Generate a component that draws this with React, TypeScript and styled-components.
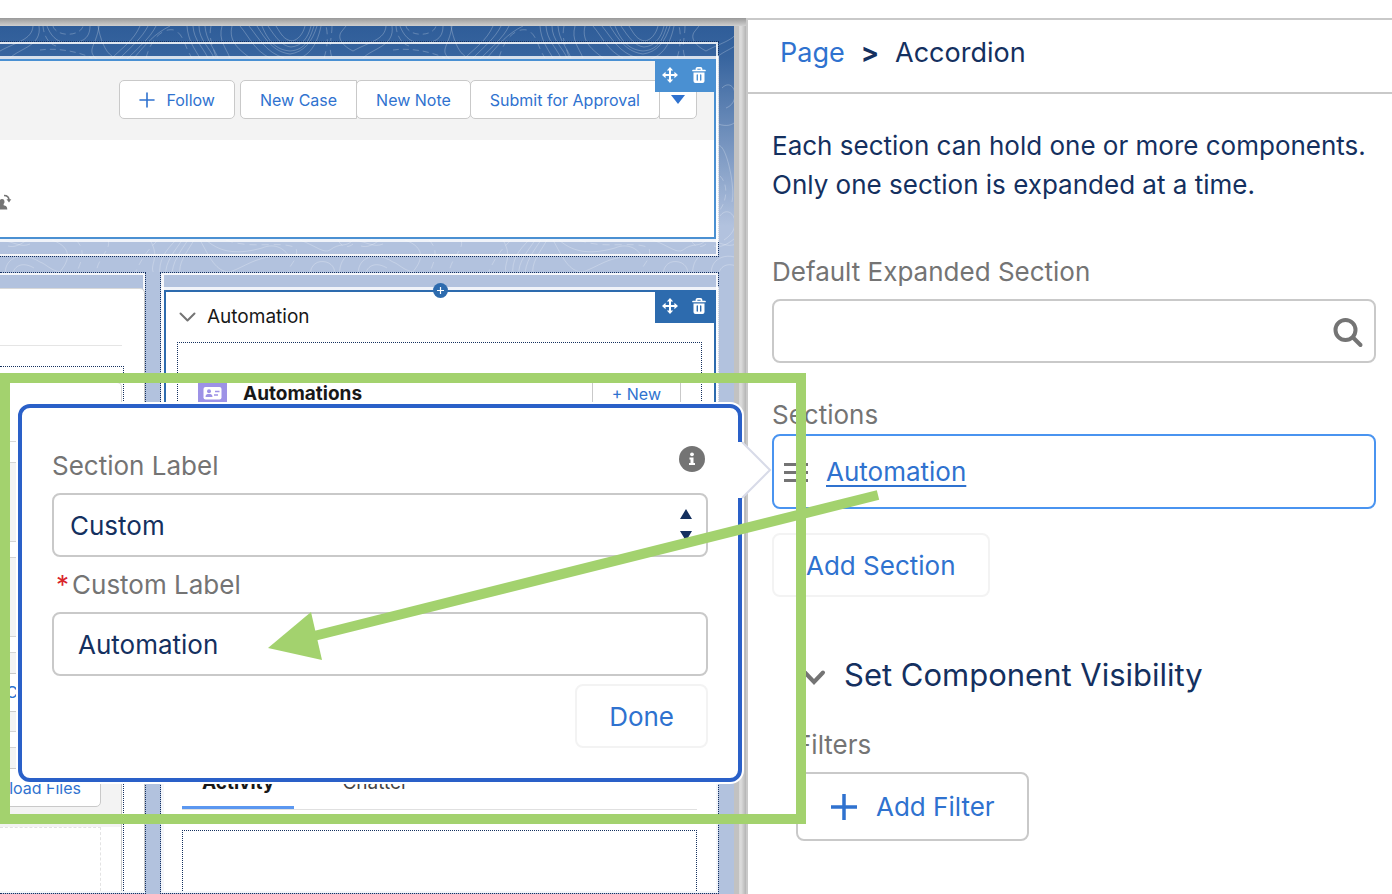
import React from "react";
import styled, { createGlobalStyle, css } from "styled-components";

const color = {
  link: "#2f72cf",
  navy: "#14305f",
  grey: "#747474",
  line: "#c9c9c9",
  faint: "#f3f3f3",
  canvas: "#b2c2de",
  select: "#4a90d2",
  active: "#2d6bae",
  popover: "#2a60c8",
  marker: "#a3d26e",
};

const GlobalStyle = createGlobalStyle`
  *, *::before, *::after { box-sizing: border-box; }
  body {
    margin: 0;
    background: #fff;
    color: ${color.navy};
    font-family: Inter, "Liberation Sans", sans-serif;
  }
  button, input, select { font: inherit; color: inherit; margin: 0; }
  h2, h3, p { margin: 0; font-weight: 400; }
`;

const Page = styled.div`
  display: flex;
  min-height: 100vh;
  padding-top: 18px;
  overflow: hidden;
`;

/* ---------- canvas ---------- */

const Canvas = styled.main`
  flex: 1;
  min-width: 0;
  display: flex;
  padding: 8px 12px 0 0;
  border-right: 2px solid ${color.line};
  background:
    linear-gradient(#999, #cfcfcf) top / 100% 8px no-repeat,
    linear-gradient(to left, #b4b4b4 0, #dcdcdc 5px, #d6d6d6 7px, #c2c2c2 7px);
`;

const Board = styled.div`
  position: relative;
  flex: 1;
  min-width: 0;
  display: flex;
  flex-direction: column;
  gap: 15px;
  padding: 15px 15px 0 0;
  overflow: hidden;
  background: linear-gradient(#2f5d99 0, #38659f 32px, #b2c2de 200px);
`;

const Contours = styled.svg`
  position: absolute;
  inset: 0 0 auto 0;
  width: 100%;
  height: 246px;
`;

const Region = styled.section<{ $open?: boolean }>`
  position: relative;
  display: flex;
  flex-direction: column;
  min-width: 0;
  border: 1px dotted ${color.navy};
  ${(p) => p.$open && css`border-left: 0;`}
`;

const Frame = styled.div<{ $open?: boolean }>`
  flex: 1;
  display: flex;
  flex-direction: column;
  border: 2px solid rgba(255, 255, 255, 0.85);
  border-left-width: ${(p) => (p.$open ? 0 : 3)}px;
`;

const Block = styled.div<{ $tone: string; $open?: boolean }>`
  position: relative;
  margin-top: 15px;
  border: 2px solid ${(p) => p.$tone};
  ${(p) => p.$open && css`border-left: 0;`}
  background: #fff;
  box-shadow: 0 0 0 3px rgba(255, 255, 255, 0.8);
`;

const HeaderBlock = styled(Block)`
  margin: 15px 0 15px;
  min-height: 180px;
`;

const AccordionBlock = styled(Block)`
  min-height: 440px;
`;

const BlockTools = styled.div<{ $tone: string }>`
  position: absolute;
  top: 0;
  right: 0;
  display: flex;
  gap: 9px;
  padding: 4px 5px 7px;
  background: ${(p) => p.$tone};
`;

const ToolButton = styled.button`
  display: flex;
  padding: 0;
  border: 0;
  background: none;
  width: 20px;
  height: 20px;
`;

const AddBadge = styled.button`
  position: absolute;
  top: -9px;
  left: 50%;
  display: flex;
  width: 15px;
  height: 15px;
  margin-left: -7px;
  padding: 0;
  border: 0;
  border-radius: 50%;
  background: ${color.active};
`;

const ActionBar = styled.div`
  display: flex;
  justify-content: flex-end;
  gap: 5px;
  padding: 19px 17px 21px;
  background: ${color.faint};
`;

const ButtonGroup = styled.div`
  display: flex;
  > * { border-radius: 0; margin-left: -1px; }
  > *:first-child { border-radius: 5px 0 0 5px; margin-left: 0; }
  > *:last-child { border-radius: 0 5px 5px 0; }
`;

const SmallButton = styled.button<{ $pad?: number }>`
  flex: none;
  display: flex;
  align-items: center;
  justify-content: center;
  gap: 11px;
  height: 39px;
  padding: 0 ${(p) => p.$pad ?? 19}px;
  border: 1px solid ${color.line};
  border-radius: 5px;
  background: #fff;
  color: ${color.link};
  font-size: 16px;
  line-height: 20px;
  white-space: nowrap;
`;

const HeaderBody = styled.div`
  padding-top: 54px;
  svg { display: block; }
`;

const Columns = styled.div`
  position: relative;
  flex: 1;
  display: grid;
  grid-template-columns: 146px minmax(0, 1fr);
  gap: 14px;
`;

const MainCard = styled.div`
  flex: 1;
  margin: 13px -2px 0 0;
  padding: 56px 22px 0 0;
  border-top: 1px solid #d8d8d8;
  border-right: 1px solid ${color.line};
  border-top-right-radius: 5px;
  background: #fff;
  display: flex;
  flex-direction: column;
`;

const RelatedLists = styled.div`
  flex: 1;
  display: flex;
  flex-direction: column;
  gap: 15px;
  margin: 20px -2px 0 0;
  padding: 15px 1px 0 0;
  border-top: 1px dotted ${color.navy};
  border-right: 1px dotted ${color.navy};
`;

const Rule = styled.div`
  border-top: 1px solid #e5e5e5;
`;

const SummaryCard = styled.div`
  height: 60px;
  margin-bottom: 5px;
  border: 1px solid #d8d8d8;
  border-left: 0;
  border-radius: 0 5px 0 0;
`;

const ListHeader = styled.div`
  display: flex;
  justify-content: flex-end;
  align-items: center;
  height: 80px;
  padding-right: 20px;
  overflow: hidden;
  border: 1px solid #d4d4d4;
  border-left: 0;
  background: ${color.faint};
`;

const LastList = styled.div`
  flex: 1;
  display: flex;
  flex-direction: column;
  border-right: 1px solid ${color.line};
  ${ListHeader} { border-right: 0; border-bottom: 0; }
`;

const DropZone = styled.div`
  flex: 1;
  margin-right: 20px;
  border-top: 1px dashed #e3e3e3;
  border-right: 1px dashed #e3e3e3;
`;

const ClippedButton = styled(SmallButton)`
  flex: 1;
  justify-content: flex-start;
  padding: 0 5px;
`;

const AccordionTitle = styled.h3`
  display: flex;
  align-items: center;
  gap: 11px;
  height: 50px;
  padding-left: 13px;
  color: #181818;
  font-size: 19px;
  line-height: 24px;
`;

const Slot = styled.div`
  margin: 0 12px 0 11px;
  padding: 31px 20px 0;
  border: 1px dotted ${color.navy};
  border-bottom: 0;
`;

const SlotHeader = styled.div`
  display: flex;
  align-items: center;
  gap: 16px;
  height: 39px;
`;

const SlotTitle = styled.h3`
  flex: 1;
  color: #181818;
  font-size: 19px;
  font-weight: 700;
  line-height: 24px;
`;

const TabsCard = styled.div`
  flex: 1;
  display: flex;
  flex-direction: column;
  margin-top: 15px;
  padding: 16px 19px 0 18px;
  background: #fff;
`;

const TabList = styled.div`
  display: flex;
  gap: 28px;
  border-bottom: 1px solid #e0e0e0;
`;

const Tab = styled.button<{ $on?: boolean }>`
  height: 48px;
  padding: 0 20px 2px;
  border: 0;
  border-bottom: 3px solid ${(p) => (p.$on ? "#5b97f0" : "transparent")};
  background: none;
  color: ${(p) => (p.$on ? "#181818" : "#444")};
  font-size: 19px;
  font-weight: ${(p) => (p.$on ? 700 : 400)};
  line-height: 24px;
`;

const TabSlot = styled.div`
  flex: 1;
  margin-top: 20px;
  border: 1px dotted ${color.navy};
  border-bottom: 0;
`;

/* ---------- property panel ---------- */

const Panel = styled.aside`
  flex: 0 0 644px;
  border-top: 2px solid ${color.line};
  background: #fff;
`;

const Crumbs = styled.nav`
  display: flex;
  align-items: center;
  gap: 16px;
  height: 74px;
  padding: 0 32px 8px;
  border-bottom: 2px solid ${color.line};
  font-size: 27px;
  line-height: 39px;
  a { color: ${color.link}; text-decoration: none; }
  b { font-weight: 700; }
`;

const PanelBody = styled.div`
  padding: 32px 16px 0 24px;
  font-size: 26px;
  line-height: 39px;
`;

const Label = styled.label`
  color: ${color.grey};
`;

const Caption = styled.div`
  color: ${color.grey};
`;

const Field = styled.div<{ $top?: number }>`
  position: relative;
  display: flex;
  flex-direction: column;
  gap: 8px;
  margin-top: ${(p) => p.$top ?? 0}px;
`;

const control = css`
  width: 100%;
  height: 64px;
  border: 2px solid ${color.line};
  border-radius: 8px;
  background: #fff;
  color: ${color.navy};
  outline: 0;
`;

const TextInput = styled.input`
  ${control}
  padding: 0 24px;
`;

const Select = styled.select`
  ${control}
  appearance: none;
  padding: 0 16px;
`;

const ControlWrap = styled.div`
  position: relative;
  display: flex;
`;

const ControlIcon = styled.svg`
  position: absolute;
  top: 0;
  right: 10px;
  height: 100%;
  pointer-events: none;
`;

const SectionItem = styled.div`
  position: relative;
  display: flex;
  align-items: center;
  gap: 18px;
  height: 75px;
  padding: 0 10px;
  border: 2px solid #4a94f0;
  border-radius: 8px;
  a {
    color: ${color.link};
    text-underline-offset: 4px;
    text-decoration-thickness: 2px;
  }
`;

const SectionsBlock = styled.div`
  margin: 32px 0 24px;
`;

const Button = styled.button<{ $faint?: boolean; $tall?: boolean }>`
  display: flex;
  align-items: center;
  gap: 18px;
  height: ${(p) => (p.$tall ? 69 : 64)}px;
  padding: 0 32px;
  border: 2px solid ${(p) => (p.$faint ? color.faint : color.line)};
  border-radius: 8px;
  background: #fff;
  color: ${color.link};
`;

const Visibility = styled.section`
  margin-top: 54px;
  padding-left: 24px;
`;

const VisibilityTitle = styled.h2`
  display: flex;
  align-items: center;
  gap: 18px;
  margin: 0 0 26px 6px;
  font-size: 31px;
  line-height: 48px;
`;

const FilterLabel = styled(Caption)`
  margin-bottom: 8px;
`;

/* ---------- popover and marker ---------- */

const Popover = styled.div`
  position: absolute;
  z-index: 2;
  top: -32px;
  right: 100%;
  width: 724px;
  margin-right: 32px;
  padding: 38px 30px 30px;
  display: flex;
  flex-direction: column;
  gap: 8px;
  border: 4px solid ${color.popover};
  border-radius: 12px;
  background: #fff;
  box-shadow: 0 0 0 2px #fff;
`;

const Nubbin = styled.svg`
  position: absolute;
  top: 32px;
  left: 100%;
`;

const LabelRow = styled.div`
  display: flex;
  justify-content: space-between;
  align-items: flex-start;
  padding-right: 3px;
`;

const RequiredLabel = styled(Label)`
  display: flex;
  gap: 3px;
  padding-left: 4px;
  span { color: #d9252a; }
`;

const DoneRow = styled.div`
  display: flex;
  justify-content: flex-end;
`;

const Marker = styled.svg`
  position: absolute;
  z-index: 3;
  top: -63px;
  left: -774px;
  pointer-events: none;
`;

function ContourLines() {
  return (
    <Contours aria-hidden="true">
      <defs>
        <pattern id="contour" width="353" height="250" patternUnits="userSpaceOnUse">
          <g fill="none" stroke="#fff" strokeOpacity="0.24" strokeWidth="1">
            <path d="M33 0C32 14 16 16 0 25M353 25C343 20 336 12 342 5L346 0" />
            <path d="M39 0C42 20 20 22 10 32M90 0C90 14 80 17 68 17C56 17 50 8 47 0M99 0C96 22 84 24 100 36M98 0C100 12 105 26 112 30" />
            <path d="M53 0C56 11 80 11 83 0M43 0C44 12 50 18 56 20M40 24C54 22 74 24 92 32" strokeDasharray="6 4" />
            <path d="M112 32C122 22 134 14 140 0M120 32C132 20 142 12 148 0M126 34C140 20 150 12 156 0M134 32C146 18 154 8 170 0" />
            <path d="M146 32C152 10 164 2 174 4C184 8 184 20 192 32" strokeDasharray="7 5" />
            <path d="M187 0C188 14 194 22 200 32M193 0C194 14 202 20 208 32M199 0C199 14 210 22 214 32M205 0C206 14 214 22 218 32M222 0C218 14 226 22 230 32" />
            <path d="M211 0C208 14 214 22 216 32M324 32C328 20 328 8 326 0M332 0C332 12 328 20 332 32" strokeDasharray="7 5" />
            <path d="M232 0C228 16 240 24 250 32M240 0C250 12 254 24 270 32M249 0C260 14 266 26 284 32M257 0C268 18 276 26 290 28C304 26 312 16 317 0" />
            <path d="M268 0C276 12 282 20 291 21C302 20 308 12 311 0M276 0C281 8 284 14 292 15C298 14 303 8 305 0M262 0C270 20 280 24 290 25C306 24 310 12 314 0M321 0C316 24 306 30 296 34" />
            <path d="M16 62C28 50 36 76 20 82M12 98C30 104 32 90 40 86M10 122C18 108 30 160 26 176M14 190C24 176 40 200 18 214M8 220C20 224 36 206 40 200" />
            <path d="M14 150C24 160 20 180 10 188" strokeDasharray="6 4" />
            <path d="M0 214C16 216 20 222 30 218M6 250C2 236 18 222 40 236C46 238 50 244 60 246M12 250C14 238 24 236 34 242M52 214C74 222 70 236 56 250M20 250C24 246 30 246 36 250" />
            <path d="M76 214C86 224 82 234 76 248M108 214C112 224 96 232 96 250M134 250C142 230 150 222 158 214" strokeDasharray="7 5" />
            <path d="M150 214C162 234 146 240 156 250M160 250C158 234 166 224 176 214M166 250C164 236 176 224 182 214M172 250C172 236 180 226 188 214M180 250C178 236 186 228 194 214" />
            <path d="M200 214C210 232 216 246 230 246C246 240 254 232 276 230M206 214C222 228 240 228 262 222C276 216 286 224 290 232" />
            <path d="M226 214C252 224 280 214 296 222C300 236 284 240 290 250M338 214C342 222 348 222 353 218" strokeDasharray="7 5" />
            <path d="M310 250C310 238 318 234 326 236C334 238 336 246 334 250M340 250C338 238 346 226 353 230M300 214C316 220 324 228 330 224C340 216 346 222 353 214" />
          </g>
        </pattern>
      </defs>
      <rect width="100%" height="246" fill="url(#contour)" />
    </Contours>
  );
}

function Tools({ tone }: { tone: string }) {
  return (
    <BlockTools $tone={tone}>
      <ToolButton aria-label="Move component">
        <svg width="20" height="20" viewBox="0 0 20 20">
          <path d="M10 4v12M4 10h12" stroke="#fff" strokeWidth="2" />
          <path d="M10 2l3.2 3.6H6.800zM10 18l3.200-3.600H6.800zM2 10l3.600-3.200v6.400zM18 10l-3.600-3.200v6.400z" fill="#fff" />
        </svg>
      </ToolButton>
      <ToolButton aria-label="Delete component">
        <svg width="20" height="20" viewBox="0 0 20 20">
          <path d="M4 5.500h12M7.500 5V3.800a1 1 0 0 1 1-1h3a1 1 0 0 1 1 1V5" fill="none" stroke="#fff" strokeWidth="1.700" strokeLinecap="round" />
          <path d="M4.500 7.500h11v8.500a2 2 0 0 1-2 2h-7a2 2 0 0 1-2-2z" fill="#fff" />
          <path d="M8.300 10v5M11.700 10v5" stroke={tone} strokeWidth="1.400" strokeLinecap="round" />
        </svg>
      </ToolButton>
    </BlockTools>
  );
}

export default function App() {
  return (
    <>
      <GlobalStyle />
      <Page>
        <Canvas>
          <Board>
            <ContourLines />
            <Region $open>
              <Frame $open>
                <HeaderBlock $tone={color.select} $open>
                  <ActionBar>
                    <SmallButton>
                      <svg width="16" height="16" viewBox="0 0 16 16">
                        <path d="M8 1v14M1 8h14" stroke={color.link} strokeWidth="1.600" strokeLinecap="round" />
                      </svg>
                      Follow
                    </SmallButton>
                    <ButtonGroup>
                      <SmallButton>New Case</SmallButton>
                      <SmallButton>New Note</SmallButton>
                      <SmallButton>Submit for Approval</SmallButton>
                      <SmallButton $pad={11} aria-label="More actions">
                        <svg width="14" height="9" viewBox="0 0 14 9">
                          <path d="M0 0h14L7 9z" fill={color.link} />
                        </svg>
                      </SmallButton>
                    </ButtonGroup>
                  </ActionBar>
                  <HeaderBody>
                    <svg width="12" height="16" viewBox="0 0 12 16" fill={color.grey}>
                      <path d="M-3 15.500c0-3 1.500-3.700 3-4.200v-1.500C-1 9-1 5 2 5s3 4 1.600 5v1.300C6 12 7.300 12.500 7.300 15.500z" />
                      <path d="M4 1.500c3 0 5 2 5 5" fill="none" stroke={color.grey} strokeWidth="1.700" />
                      <path d="M6.500 5.200h4.800L9 8.500z" />
                    </svg>
                  </HeaderBody>
                  <Tools tone={color.select} />
                </HeaderBlock>
              </Frame>
            </Region>
            <Columns>
              <Region $open>
                <Frame $open>
                  <MainCard>
                    <Rule />
                    <RelatedLists>
                      <SummaryCard />
                      <ListHeader />
                      <ListHeader />
                      <ListHeader>
                        <ClippedButton>C</ClippedButton>
                      </ListHeader>
                      <LastList>
                        <ListHeader>
                          <SmallButton>Upload Files</SmallButton>
                        </ListHeader>
                        <DropZone />
                      </LastList>
                    </RelatedLists>
                  </MainCard>
                </Frame>
              </Region>
              <Region>
                <Frame>
                  <AccordionBlock $tone={color.active}>
                    <AccordionTitle>
                      <svg width="17" height="10" viewBox="0 0 17 10">
                        <path d="M1.500 1.500l7 7 7-7" fill="none" stroke={color.grey} strokeWidth="2" strokeLinecap="round" strokeLinejoin="round" />
                      </svg>
                      Automation
                    </AccordionTitle>
                    <Slot>
                      <SlotHeader>
                        <svg width="29" height="30" viewBox="0 0 29 30">
                          <rect width="29" height="30" rx="3" fill="#9d92e6" />
                          <rect x="5.500" y="8" width="18" height="12.500" rx="2" fill="#fff" />
                          <circle cx="11" cy="12.300" r="2" fill="#9d92e6" />
                          <path d="M7.500 18c0-2.500 1.500-3 3.500-3s3.500.5 3.500 3z" fill="#9d92e6" />
                          <path d="M17 12.500h4.500M16 16h4" stroke="#9d92e6" strokeWidth="1.600" />
                        </svg>
                        <SlotTitle>Automations</SlotTitle>
                        <SmallButton>+ New</SmallButton>
                      </SlotHeader>
                    </Slot>
                    <Tools tone={color.active} />
                    <AddBadge aria-label="Add component above">
                      <svg width="15" height="15" viewBox="0 0 15 15">
                        <path d="M7.500 4v7M4 7.500h7" stroke="#fff" strokeWidth="1.200" />
                      </svg>
                    </AddBadge>
                  </AccordionBlock>
                  <TabsCard>
                    <TabList role="tablist">
                      <Tab role="tab" aria-selected="true" $on>Activity</Tab>
                      <Tab role="tab" aria-selected="false">Chatter</Tab>
                    </TabList>
                    <TabSlot />
                  </TabsCard>
                </Frame>
              </Region>
            </Columns>
          </Board>
        </Canvas>

        <Panel>
          <Crumbs aria-label="Breadcrumb">
            <a href="#page">Page</a>
            <b>&gt;</b>
            <span>Accordion</span>
          </Crumbs>
          <PanelBody>
            <p>Each section can hold one or more components. Only one section is expanded at a time.</p>
            <Field $top={48}>
              <Label htmlFor="default-section">Default Expanded Section</Label>
              <ControlWrap>
                <TextInput id="default-section" />
                <ControlIcon width="34" viewBox="0 0 34 64">
                  <circle cx="13.500" cy="31" r="10" fill="none" stroke={color.grey} strokeWidth="4" />
                  <path d="M21 38.500l7.500 7.500" stroke={color.grey} strokeWidth="4" strokeLinecap="round" />
                </ControlIcon>
              </ControlWrap>
            </Field>
            <SectionsBlock>
              <Caption>Sections</Caption>
              <SectionItem>
                <svg width="24" height="20" viewBox="0 0 24 20">
                  <path d="M0 2.500h24M0 10.500h24M0 18.500h24" stroke={color.grey} strokeWidth="3" />
                </svg>
                <a href="#automation">Automation</a>
                <Popover role="dialog" aria-label="Section">
                  <LabelRow>
                    <Label htmlFor="section-label">Section Label</Label>
                    <svg width="26" height="26" viewBox="0 0 26 26">
                      <circle cx="13" cy="13" r="13" fill={color.grey} />
                      <circle cx="13" cy="8.300" r="1.900" fill="#fff" />
                      <path d="M10.500 11.500h4v5.500h1.500v2h-6v-2h1.500v-3.500h-1z" fill="#fff" />
                    </svg>
                  </LabelRow>
                  <ControlWrap>
                    <Select id="section-label" defaultValue="custom">
                      <option value="custom">Custom</option>
                    </Select>
                    <ControlIcon width="24" viewBox="0 0 24 64" fill={color.navy}>
                      <path d="M6 26h12L12 16zM6 38h12l-6 10z" />
                    </ControlIcon>
                  </ControlWrap>
                  <RequiredLabel htmlFor="custom-label">
                    <span>*</span>Custom Label
                  </RequiredLabel>
                  <TextInput id="custom-label" defaultValue="Automation" />
                  <DoneRow>
                    <Button $faint>Done</Button>
                  </DoneRow>
                  <Nubbin width="34" height="60" viewBox="0 0 34 60">
                    <path d="M0 2h4L32 30 4 58H0z" fill="#fff" />
                    <path d="M4 2l28 28L4 58" fill="none" stroke="#d8dbe8" strokeWidth="2" />
                  </Nubbin>
                </Popover>
                <Marker width="880" height="452" viewBox="0 0 880 452" aria-hidden="true">
                  <rect x="5" y="5" width="796" height="441" fill="none" stroke={color.marker} strokeWidth="10" />
                  <path d="M878 122L314 263" stroke={color.marker} strokeWidth="10" />
                  <path d="M268 275l43-36 11 48z" fill={color.marker} />
                </Marker>
              </SectionItem>
            </SectionsBlock>
            <Button $faint>Add Section</Button>
            <Visibility>
              <VisibilityTitle>
                <svg width="24" height="20" viewBox="0 0 24 20">
                  <path d="M3 7.500l9 9.500 9-9.500" fill="none" stroke={color.grey} strokeWidth="4" strokeLinecap="round" />
                </svg>
                Set Component Visibility
              </VisibilityTitle>
              <FilterLabel>Filters</FilterLabel>
              <Button $tall>
                <svg width="28" height="28" viewBox="0 0 28 28">
                  <path d="M14 1v26M1 14h26" stroke={color.link} strokeWidth="3.500" />
                </svg>
                Add Filter
              </Button>
            </Visibility>
          </PanelBody>
        </Panel>
      </Page>
    </>
  );
}
